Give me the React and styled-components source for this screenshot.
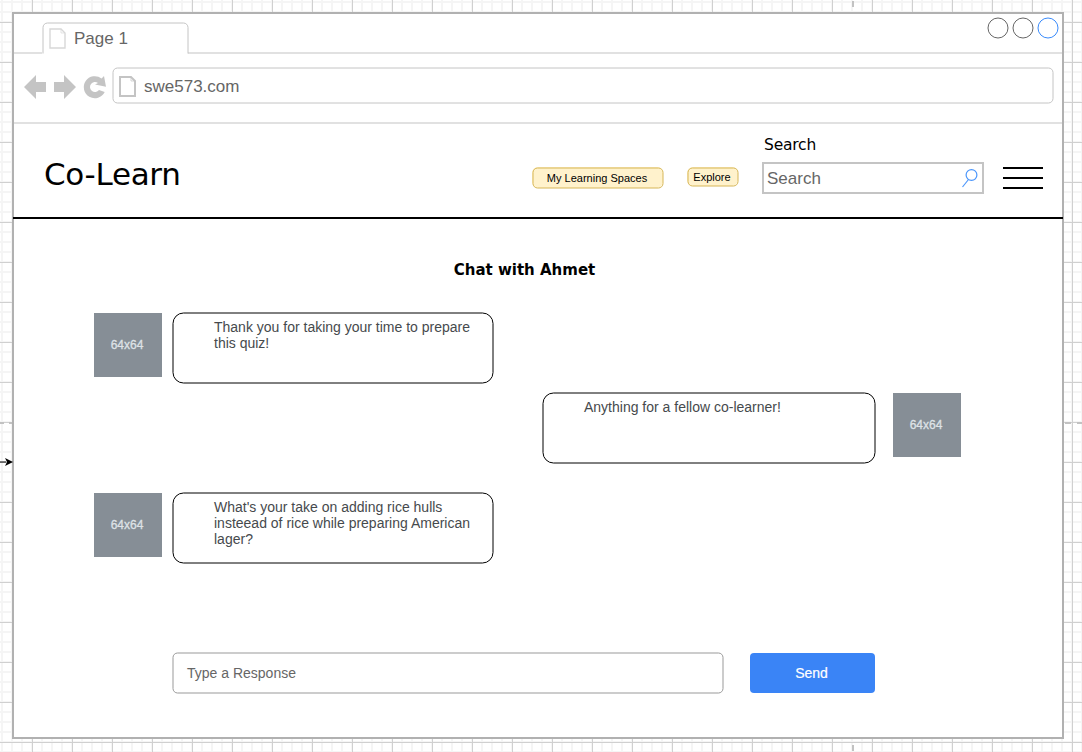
import React from "react";
import styled, { createGlobalStyle, css } from "styled-components";

const Global = createGlobalStyle`
  *, *::before, *::after { box-sizing: border-box; }
  body { margin: 0; }
`;

const sans = `"Liberation Sans", Arial, sans-serif`;
const wide = `"DejaVu Sans", Verdana, sans-serif`;

/* One-pixel outline centred on a pixel boundary, so straight edges are soft. */
const outline = (color, radius) => css`
  position: relative;
  &::before {
    content: "";
    position: absolute;
    inset: 0;
    border: 1px solid ${color};
    border-radius: ${radius}px;
    transform: translate(0.5px, 0.5px);
    pointer-events: none;
  }
`;

const Canvas = styled.div`
  position: relative;
  width: 1082px;
  height: 752px;
  padding: 12px;
  overflow: hidden;
  font-family: ${sans};
  background-color: #fff;
  background-image:
    linear-gradient(#d0d0d0 1px, transparent 1px),
    linear-gradient(90deg, #d0d0d0 1px, transparent 1px),
    linear-gradient(#f5f5f5 2px, transparent 2px),
    linear-gradient(90deg, #f5f5f5 2px, transparent 2px);
  background-size: 40px 40px, 40px 40px, 10px 10px, 10px 10px;
  background-position: 0 22px, 32px 0, 0 1px, 1px 0;
`;

const CanvasMarks = styled.svg`
  position: absolute;
  inset: 0;
`;

const Window = styled.div`
  position: relative;
  width: 1052px;
  height: 727px;
  border: 2px solid #b1b1b1;
  background: #fff;
`;

const TabStrip = styled.div`
  display: flex;
  height: 40px;
`;

const StripLine = styled.div`
  display: flex;
  justify-content: flex-end;
  flex: ${(p) => (p.$width ? `0 0 ${p.$width}px` : "1")};
  border-bottom: 2px solid #e1e1e1;
`;

const Tab = styled.div`
  ${outline("#c4c4c4", 5)}
  display: flex;
  width: 146px;
  height: 32px;
  margin-top: 8px;
  padding: 6px 0 0 7px;
  &::before {
    bottom: -8px;
    clip-path: inset(-1px -1px 9px -1px);
  }
`;

const ChromeText = styled.span`
  font-size: 17px;
  line-height: 20px;
  color: #666;
  white-space: nowrap;
  margin-left: ${(p) => p.$gap || 0}px;
  padding-top: 1px;
`;

const WindowButtons = styled.div`
  display: flex;
  gap: 4px;
  padding: 3px 4px 0 0;
`;

const WindowButton = styled.span`
  ${(p) => outline(p.$color, 11)}
  width: 21px;
  height: 21px;
`;

const AddressRow = styled.div`
  display: flex;
  height: 70px;
  padding: 13px 8px 0 9px;
  border-bottom: 2px solid #e1e1e1;
`;

const NavIcons = styled.svg`
  flex: none;
  width: 89px;
  height: 36px;
`;

const AddressBar = styled.div`
  ${outline("#c4c4c4", 5)}
  display: flex;
  width: 941px;
  height: 36px;
  padding: 9px 0 0 7px;
`;

const SiteHeader = styled.header`
  display: flex;
  height: 95px;
  margin: 0 -1px;
  padding-left: 31px;
  border-bottom: 2px solid #000;
`;

const Brand = styled.h1`
  width: 488px;
  margin: 31px 0 0;
  font: 400 31px/38px ${wide};
  letter-spacing: -0.3px;
  color: #000;
`;

const PillButton = styled.button`
  ${outline("#d6b656", 5)}
  width: ${(p) => p.$width}px;
  height: ${(p) => p.$height}px;
  margin: 43px ${(p) => p.$after}px 0 0;
  padding: 2px 1px 0 0;
  border: 0;
  border-radius: 6px;
  background: #fff2cc;
  font: 11px/${(p) => p.$height - 2}px ${sans};
  color: #000;
  white-space: nowrap;
`;

const SearchField = styled.label`
  width: 222px;
  padding-top: 11px;
`;

const SearchLabel = styled.span`
  display: block;
  height: 27px;
  padding-left: 2px;
  font: 15.5px/20px ${wide};
  letter-spacing: -0.2px;
  color: #000;
`;

const SearchBox = styled.span`
  display: flex;
  justify-content: space-between;
  height: 32px;
  padding: 4px 3px 0 3px;
  border: 2px solid #c4c4c4;
`;

const Menu = styled.div`
  display: flex;
  flex-direction: column;
  gap: 8px;
  width: 40px;
  margin: 43px 0 0 19px;
`;

const MenuBar = styled.span`
  height: 2px;
  background: #000;
`;

const Chat = styled.main`
  display: flex;
  flex-direction: column;
`;

const ChatTitle = styled.h2`
  width: 100%;
  margin: 41px 0 32px;
  padding-right: 27px;
  font: 700 15px/20px ${wide};
  color: #000;
  text-align: center;
`;

const Message = styled.div`
  display: flex;
  flex-direction: ${(p) => (p.$own ? "row-reverse" : "row")};
  gap: ${(p) => (p.$own ? 18 : 10)}px;
  height: ${(p) => p.$height}px;
  padding: 0 ${(p) => (p.$own ? 101 : 0)}px 0 ${(p) => (p.$own ? 0 : 80)}px;
`;

const Avatar = styled.div`
  width: 68px;
  height: 64px;
  margin-top: 1px;
  background: #868e96;
  font-size: 12px;
  line-height: 64px;
  padding-right: 2px;
  text-align: center;
  color: #dee2e6;
  -webkit-text-stroke: 0.3px #dee2e6;
`;

const Bubble = styled.div`
  ${outline("#000", 11)}
  width: ${(p) => p.$width}px;
  height: 71px;
  padding: 7px 10px 0 42px;
  font-size: 14px;
  line-height: 16px;
  color: #464a4d;
  white-space: pre-line;
`;

const Composer = styled.form`
  display: flex;
  padding-left: 158px;
`;

const ResponseBox = styled.div`
  ${outline("#999", 5)}
  width: 551px;
  height: 41px;
  padding-left: 15px;
  font-size: 14px;
  line-height: 42px;
  color: #666;
`;

const SendButton = styled.button`
  width: 125px;
  height: 40px;
  margin: 1px 0 0 27px;
  padding: 0 2px 0 0;
  border: 0;
  border-radius: 4px;
  background: #3a84f6;
  font: 14px/40px ${sans};
  color: #fff;
  -webkit-text-stroke: 0.2px #fff;
`;

const PageIcon = ({ stroke, width }) => (
  <svg width="18" height="21" viewBox="0 0 18 21" fill="none" stroke={stroke}>
    <path d="M1 1H12L16 5V20H1Z" strokeWidth={width} />
    <path d="M12 1V5H16" strokeWidth="0.7" />
  </svg>
);

const SearchIcon = () => (
  <svg width="18" height="22" viewBox="0 0 18 22" fill="none" stroke="#4b96fb" strokeWidth="1.2">
    <circle cx="10.5" cy="7" r="5.4" />
    <path d="M7.5 11.5L1.5 19" />
  </svg>
);

const messages = [
  { text: "Thank you for taking your time to prepare\nthis quiz!", width: 321, height: 80 },
  { text: "Anything for a fellow co-learner!", width: 333, height: 100, own: true },
  {
    text: "What's your take on adding rice hulls\ninsteead of rice while preparing American\nlager?",
    width: 321,
    height: 160,
  },
];

export default function App() {
  return (
    <Canvas>
      <Global />
      <CanvasMarks width="1082" height="752">
        <path
          d="M0 423H4M9 423H12M1065 423H1071M1077 423H1082M853 1V7M853 745V751"
          stroke="#c2c2c2"
          strokeWidth="2"
        />
      </CanvasMarks>
      <Window>
        <TabStrip>
          <StripLine $width={28} />
          <Tab>
            <PageIcon stroke="#d8d8d8" width="1.4" />
            <ChromeText $gap={7}>Page 1</ChromeText>
          </Tab>
          <StripLine>
            <WindowButtons>
              <WindowButton $color="#666" />
              <WindowButton $color="#666" />
              <WindowButton $color="#3a8bfb" />
            </WindowButtons>
          </StripLine>
        </TabStrip>
        <AddressRow>
          <NavIcons viewBox="0 0 89 36" fill="#c4c4c4">
            <path d="M1 20L13 8V15H23V25H13V32Z" />
            <path d="M53 20L41 8V15H31V25H41V32Z" />
            <path d="M81 9L83 19.8L72 17.6L75 16A5 5 0 1 0 76 23L81.7 25A11 11 0 1 1 78.6 11.6Z" />
          </NavIcons>
          <AddressBar>
            <PageIcon stroke="#c4c4c4" width="2" />
            <ChromeText $gap={7}>swe573.com</ChromeText>
          </AddressBar>
        </AddressRow>
        <SiteHeader>
          <Brand>Co-Learn</Brand>
          <PillButton $width={131} $height={21} $after={24}>My Learning Spaces</PillButton>
          <PillButton $width={51} $height={19} $after={24}>Explore</PillButton>
          <SearchField>
            <SearchLabel>Search</SearchLabel>
            <SearchBox>
              <ChromeText>Search</ChromeText>
              <SearchIcon />
            </SearchBox>
          </SearchField>
          <Menu>
            <MenuBar />
            <MenuBar />
            <MenuBar />
          </Menu>
        </SiteHeader>
        <Chat>
          <ChatTitle>Chat with Ahmet</ChatTitle>
          {messages.map((m) => (
            <Message key={m.text} $own={m.own} $height={m.height}>
              <Avatar>64x64</Avatar>
              <Bubble $width={m.width}>{m.text}</Bubble>
            </Message>
          ))}
          <Composer>
            <ResponseBox>Type a Response</ResponseBox>
            <SendButton type="button">Send</SendButton>
          </Composer>
        </Chat>
      </Window>
      <CanvasMarks width="1082" height="752">
        <path d="M0 462H6" stroke="#000" />
        <path d="M13 462L5 466L7 462L5 458Z" />
      </CanvasMarks>
    </Canvas>
  );
}
